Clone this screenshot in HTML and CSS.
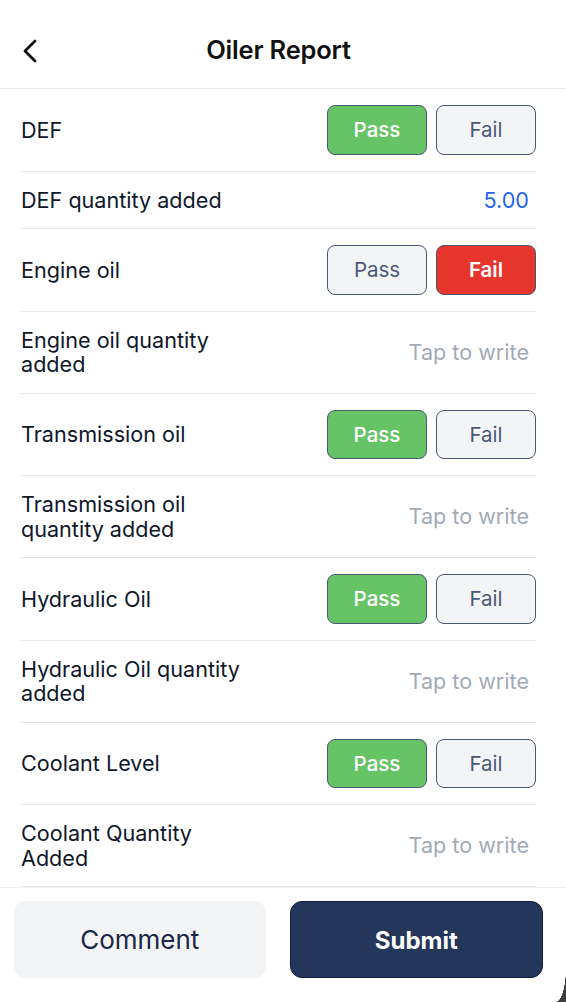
FILE: index.html
```html
<!DOCTYPE html>
<html lang="en">
<head>
<meta charset="utf-8">
<title>Oiler Report</title>
<link rel="stylesheet" href="styles.css">
</head>
<body>
<div class="app">
  <header class="header">
    <button class="back" aria-label="Back">
      <svg width="18" height="26" viewBox="0 0 18 26"><path d="M14 3 L4 13 L14 23" fill="none" stroke="#111" stroke-width="2.8" stroke-linecap="round" stroke-linejoin="round"/></svg>
    </button>
    <h1 class="title">Oiler Report</h1>
  </header>
  <main class="list">
    <div class="row">
      <div class="label">DEF</div>
      <div class="toggle"><span class="btn pass on">Pass</span><span class="btn">Fail</span></div>
    </div>
    <div class="row">
      <div class="label">DEF quantity added</div>
      <div class="value filled">5.00</div>
    </div>
    <div class="row">
      <div class="label">Engine oil</div>
      <div class="toggle"><span class="btn">Pass</span><span class="btn fail on">Fail</span></div>
    </div>
    <div class="row">
      <div class="label">Engine oil quantity added</div>
      <div class="value">Tap to write</div>
    </div>
    <div class="row">
      <div class="label">Transmission oil</div>
      <div class="toggle"><span class="btn pass on">Pass</span><span class="btn">Fail</span></div>
    </div>
    <div class="row">
      <div class="label">Transmission oil quantity added</div>
      <div class="value">Tap to write</div>
    </div>
    <div class="row">
      <div class="label">Hydraulic Oil</div>
      <div class="toggle"><span class="btn pass on">Pass</span><span class="btn">Fail</span></div>
    </div>
    <div class="row">
      <div class="label">Hydraulic Oil quantity added</div>
      <div class="value">Tap to write</div>
    </div>
    <div class="row">
      <div class="label">Coolant Level</div>
      <div class="toggle"><span class="btn pass on">Pass</span><span class="btn">Fail</span></div>
    </div>
    <div class="row">
      <div class="label">Coolant Quantity Added</div>
      <div class="value">Tap to write</div>
    </div>
  </main>
  <footer class="footer">
    <button class="action comment">Comment</button>
    <button class="action submit">Submit</button>
  </footer>
</div>
<div class="corner"></div>
</body>
</html>
```

FILE: styles.css
```css
* { box-sizing: border-box; }
html, body { margin: 0; padding: 0; background: #fff; }
body {
  font-family: Inter, "Noto Sans", "Liberation Sans", sans-serif;
  color: #0f172a;
  height: 1002px;
  overflow: hidden;
}
.app { width: 557px; }
.header {
  height: 89px;
  border-bottom: 1px solid #e5e7eb;
  display: flex;
  align-items: center;
  justify-content: flex-start;
  position: relative;
  width: 566px;
}
.header .title {
  margin: 0;
  font-size: 25.5px;
  font-weight: 600;
  color: #111;
  letter-spacing: -0.2px;
  width: 557px;
  text-align: center;
  padding-top: 10px;
}
.back {
  position: absolute;
  left: 21px;
  top: 38px;
  padding: 0;
  border: 0;
  background: none;
  display: flex;
}
.list { padding: 0 21px; }
.row {
  display: flex;
  align-items: center;
  justify-content: space-between;
  padding: 16px 0;
  border-bottom: 1px solid #e5e7eb;
}
.label {
  max-width: 232px;
  font-size: 21.6px;
  line-height: 24.5px;
  color: #0f172a;
}
.value {
  font-size: 21.6px;
  line-height: 24.5px;
  color: #a3aab7;
  padding-right: 7px;
}
.value.filled { color: #2563eb; }
.toggle { display: flex; gap: 9px; }
.btn {
  width: 100px;
  height: 49.5px;
  display: flex;
  align-items: center;
  justify-content: center;
  border: 1.5px solid #4a5872;
  border-radius: 8px;
  background: #f3f4f6;
  color: #4b5876;
  font-size: 20.5px;
}
.btn.pass.on { background: #66c466; color: #fff; font-weight: 500; }
.btn.fail.on { background: #e5352d; color: #fff; font-weight: 600; }
.footer {
  width: 566px;
  border-top: 1px solid #eef0f3;
  padding: 13px 23px 24px 14px;
  display: flex;
  gap: 24px;
}
.action {
  flex: 1;
  height: 77px;
  border: 0;
  border-radius: 12px;
  font-family: inherit;
}
.comment { background: #f3f4f6; color: #1b2745; font-weight: 400; font-size: 26px; }
.submit { background: #24365a; color: #fff; font-weight: 700; font-size: 24px; border: 1px solid #0f1d3a; padding-top: 3px; }
.corner {
  position: fixed;
  right: 0;
  bottom: 0;
  width: 10px;
  height: 34px;
  background: radial-gradient(ellipse 100% 100% at 0 0, transparent 98%, #3d3d3d 100%);
}
```
